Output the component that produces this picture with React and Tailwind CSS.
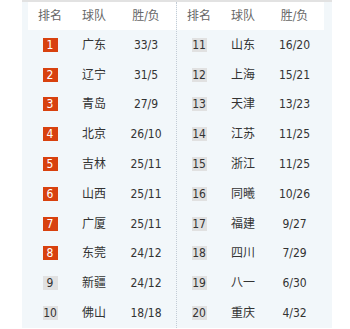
import React from "react";

const left = [
  ["1", "广东", "33/3"],
  ["2", "辽宁", "31/5"],
  ["3", "青岛", "27/9"],
  ["4", "北京", "26/10"],
  ["5", "吉林", "25/11"],
  ["6", "山西", "25/11"],
  ["7", "广厦", "25/11"],
  ["8", "东莞", "24/12"],
  ["9", "新疆", "24/12"],
  ["10", "佛山", "18/18"],
];
const right = [
  ["11", "山东", "16/20"],
  ["12", "上海", "15/21"],
  ["13", "天津", "13/23"],
  ["14", "江苏", "11/25"],
  ["15", "浙江", "11/25"],
  ["16", "同曦", "10/26"],
  ["17", "福建", "9/27"],
  ["18", "四川", "7/29"],
  ["19", "八一", "6/30"],
  ["20", "重庆", "4/32"],
];

function Half({ rows, withBorder }) {
  return (
    <div
      className={
        "w-[148px] flex flex-col " +
        (withBorder ? "border-l border-dotted border-[#c3ccd6]" : "")
      }
    >
      <div className="h-[28px] bg-white flex items-center text-[#666]">
        <div className="w-[44px] text-center">排名</div>
        <div className="w-[44px] text-center">球队</div>
        <div className="flex-1 text-center">胜/负</div>
      </div>
      {rows.map(([rank, team, score]) => {
        const top = parseInt(rank, 10) <= 8;
        return (
          <div key={rank} className="h-[30px] flex items-center text-[#333]">
            <div className="w-[44px] flex justify-center">
              <span
                className={
                  "w-[15px] h-[14px] flex items-center justify-center leading-none " +
                  (top ? "bg-[#d8410e] text-white" : "bg-[#e1e1e1] text-[#333]")
                }
              >
                {rank}
              </span>
            </div>
            <div className="w-[44px] text-center">{team}</div>
            <div className="flex-1 text-center">{score}</div>
          </div>
        );
      })}
    </div>
  );
}

export default function App() {
  return (
    <div
      className="w-[350px] h-[329px] bg-white overflow-hidden text-[12px]"
      style={{ fontFamily: '"DejaVu Sans Condensed", "Noto Sans CJK SC", sans-serif' }}
    >
      <div className="ml-[22px] w-[310px] h-[328px] overflow-hidden bg-[#f2f7fa] border-t-2 border-[#e2e2e2] pl-[6px] pr-[7px] flex">
        <Half rows={left} />
        <Half rows={right} withBorder />
      </div>
    </div>
  );
}
